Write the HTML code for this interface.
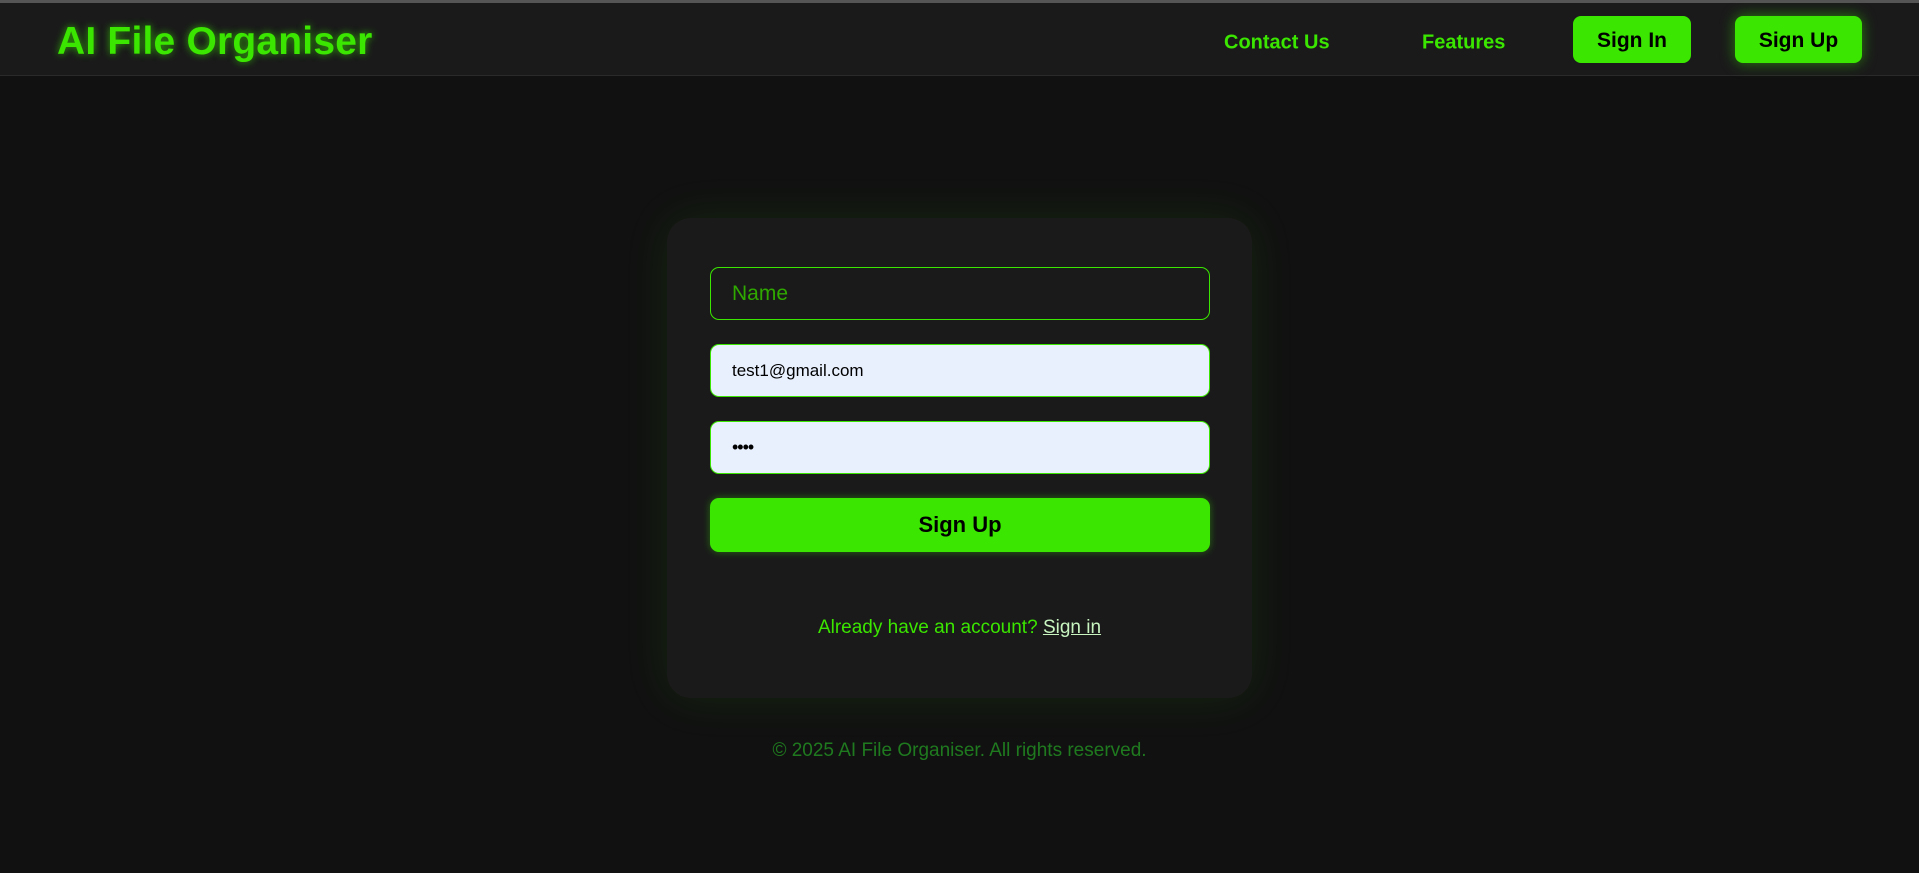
<!DOCTYPE html>
<html><head><meta charset="utf-8"><style>
*{margin:0;padding:0;box-sizing:border-box}
html,body{width:1919px;height:873px;background:#111;overflow:hidden;font-family:"Liberation Sans",sans-serif}
.top{position:absolute;left:0;top:0;width:1919px;height:3px;background:#555}
.hdr{position:absolute;left:0;top:3px;width:1919px;height:73px;background:#1a1a1a;border-bottom:1px solid #2a2a2a}
.logo{position:absolute;left:57px;top:20px;font-size:39px;font-weight:bold;color:#3be600;text-shadow:0 0 8px rgba(59,230,0,.7);line-height:44px;white-space:nowrap;letter-spacing:0.2px}
.nav{position:absolute;top:43px;transform:translateY(-50%);font-size:20px;font-weight:bold;color:#3be600;white-space:nowrap}
.btn{position:absolute;top:16px;height:47px;background:#3be600;border-radius:8px;color:#000;font-size:21px;font-weight:bold;display:flex;align-items:center;justify-content:center;padding-top:3px}
.card{position:absolute;left:667px;top:218px;width:585px;height:480px;background:#1a1a1a;border-radius:24px;box-shadow:0 0 45px rgba(59,230,0,.10)}
.in{position:absolute;left:710px;width:500px;height:53px;border:1.5px solid #3be600;border-radius:9px;padding-left:21px;display:flex;align-items:center;font-size:17px}
.sub{position:absolute;left:710px;top:498px;width:500px;height:54px;background:#3be600;border-radius:9px;font-size:22px;font-weight:bold;display:flex;align-items:center;justify-content:center;box-shadow:0 0 8px rgba(59,230,0,.4)}
.al{position:absolute;left:667px;width:585px;top:617px;text-align:center;font-size:19px;color:#3be600}
.al u{color:#c8f5c0}
.ft{position:absolute;left:0;width:1919px;top:740px;text-align:center;font-size:19px;color:#1f7a1f}
</style></head><body>
<div class="top"></div>
<div class="hdr"></div>
<div class="logo">AI File Organiser</div>
<div class="nav" style="left:1224px">Contact Us</div>
<div class="nav" style="left:1422px">Features</div>
<div class="btn" style="left:1573px;width:118px">Sign In</div>
<div class="btn" style="left:1735px;width:127px;box-shadow:0 0 14px rgba(59,230,0,.5)">Sign Up</div>
<div class="card"></div>
<div class="in" style="top:267px;background:transparent;color:#2fa800;font-size:21px">Name</div>
<div class="in" style="top:344px;background:#e8f0fe;color:#000">test1@gmail.com</div>
<div class="in" style="top:421px;background:#e8f0fe;color:#000;font-size:18px;letter-spacing:-1px">••••</div>
<div class="sub">Sign Up</div>
<div class="al">Already have an account? <u>Sign in</u></div>
<div class="ft">© 2025 AI File Organiser. All rights reserved.</div>
</body></html>
